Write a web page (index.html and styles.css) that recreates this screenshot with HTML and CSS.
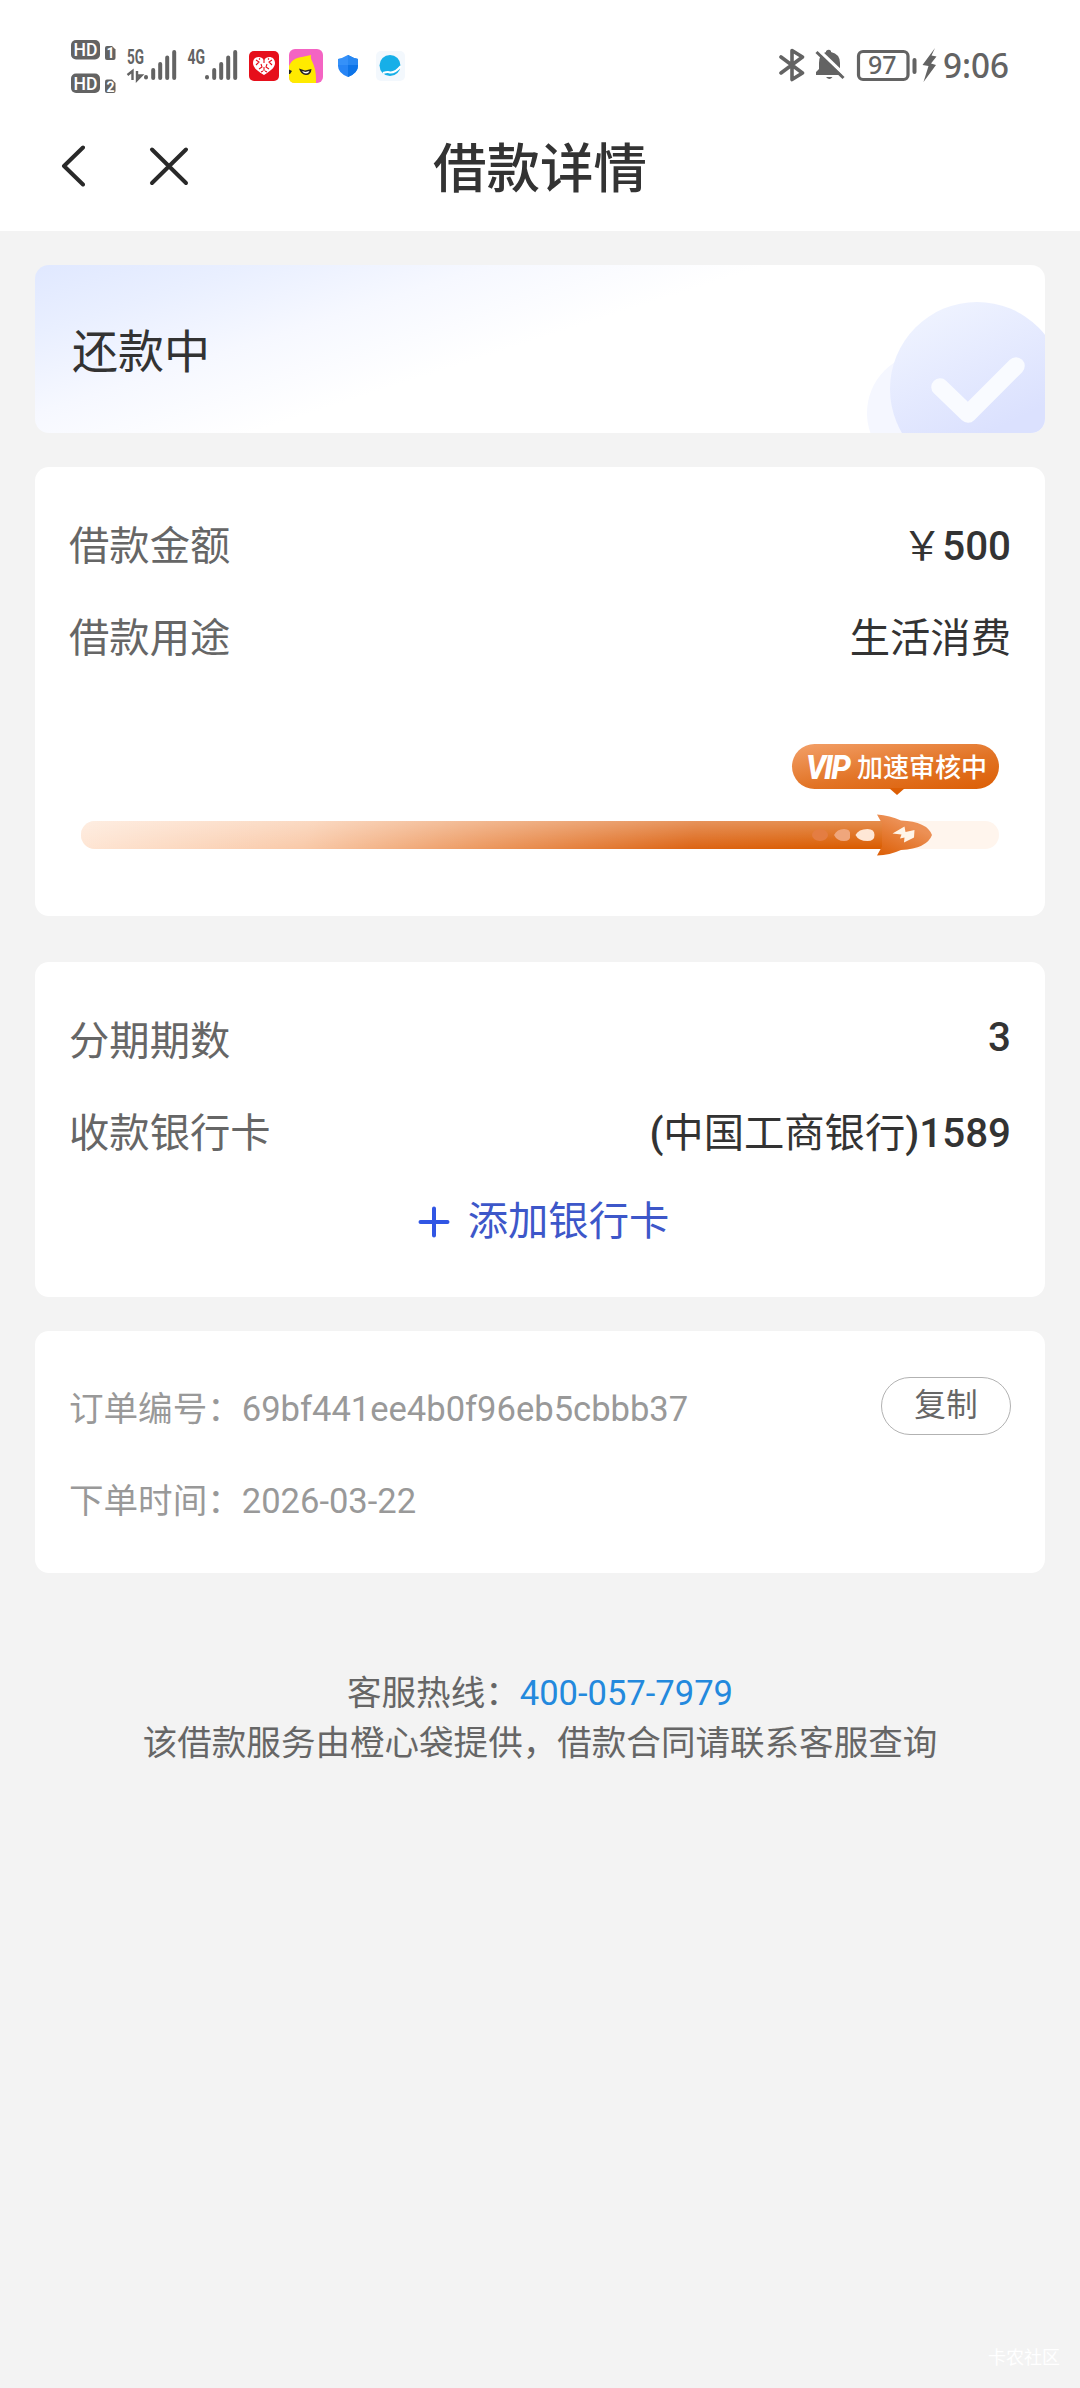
FILE: index.html
```html
<!DOCTYPE html>
<html lang="zh-CN">
<head>
<meta charset="utf-8">
<title>借款详情</title>
<link rel="stylesheet" href="styles.css">
</head>
<body>
<div class="page">
  <div class="top">
    <div class="status">
      <svg class="status-left" viewBox="71 36 335 60" width="335" height="60">
        <g fill="#636363">
          <rect x="71" y="40" width="29" height="19.500" rx="5"/>
          <rect x="71" y="73.500" width="29" height="19.500" rx="5"/>
          <path d="M105 48q0-2 2-2h5l3.500 3.500V58q0 2-2 2H107q-2 0-2-2z"/>
          <path d="M105 81.500q0-2 2-2h5l3.500 3.500v8q0 2-2 2H107q-2 0-2-2z"/>
        </g>
        <g class="hd">
          <text x="73.500" y="56" textLength="24" lengthAdjust="spacingAndGlyphs">HD</text>
          <text x="73.500" y="89.500" textLength="24" lengthAdjust="spacingAndGlyphs">HD</text>
          <text class="sim" x="106.500" y="58">1</text>
          <text class="sim" x="106.500" y="91.500">2</text>
        </g>
        <g class="net">
          <text x="127" y="63.500" textLength="17" lengthAdjust="spacingAndGlyphs">5G</text>
          <text x="187.500" y="63.500" textLength="17.500" lengthAdjust="spacingAndGlyphs">4G</text>
        </g>
        <g stroke="#636363" stroke-width="4" stroke-linecap="round">
          <path d="M146 77v.5M153.200 70v8M160.200 64v14M167.200 57.500V78M174.200 52v26"/>
          <path d="M207 77v.5M214.200 70v8M221.200 64v14M228.200 57.500V78M235.200 52v26"/>
        </g>
        <path d="M127.500 75l5-4v9M137 71v9l4.500-4.500H137" fill="none" stroke="#636363" stroke-width="2.400"/>
        <rect x="249" y="51" width="30" height="30" rx="5" fill="#e60f1b"/>
        <path d="M264 75c-8-5-11-8-11-12 0-7 8-8 11-3 3-5 11-4 11 3 0 4-3 7-11 12z" fill="#fff"/>
        <path d="M256 60l3 2-3 3M272 60l-3 2 3 3M264 59v4M259 69l3-2-1-3M269 69l-3-2 1-3M264 67v4M261 72l2-1M267 72l-2-1M259 58.500l1 1M269 58.500l-1 1" stroke="#e60f1b" stroke-width="1.100" fill="none"/>
        <rect x="289" y="49" width="34" height="34" rx="6" fill="#f464c3"/>
        <path d="M289 66c4-8 8-8 13-9l9-2c-1 4 2 7 3 11 2 5 2 11 2 17h-21q-6 0-6-6z" fill="#ffea00"/>
        <path d="M289 69.500l3 1.500-2 3h-1zM299 68.500l6 2 6.500-1.500q-.5 6-5.500 6-5 0-7-6.500z" fill="#222"/>
        <path d="M302 71l3.500 1 4-1q-1 2.500-3.500 2.500t-4-2.500z" fill="#fff"/>
        <path d="M348 55q5 3 10 4v7q0 7-10 11-10-4-10-11v-7q5-1 10-4z" fill="#2785f5"/>
        <path d="M348 55q5 3 10 4v7q0 7-10 11z" fill="#0d74e8"/>
        <path d="M348 55q5 3 10 4v6h-20v-6q5-1 10-4z" fill="#48a0ff" fill-opacity=".45"/>
        <rect x="376" y="51" width="29" height="30" rx="5" fill="#f3f8fd"/>
        <circle cx="390" cy="65.500" r="10.500" fill="#16afe8"/>
        <path d="M383 73q5-1.500 7-.5 5 .5 11-6.500" stroke="#fff" stroke-width="2" fill="none"/>
      </svg>
      <svg class="status-right" viewBox="779 36 231 60" width="231" height="60">
        <path d="M781 57l21.500 16-10.500 6.500v-29l10.500 6.500-21.500 16" fill="none" stroke="#636363" stroke-width="3.600" stroke-linejoin="round" stroke-linecap="round"/>
        <path d="M816 75v-3l3-3v-6q0-9 7-11v-1q3-2.500 5 0v1q9 2 9 11v6l3 3v3zM826 77h6.500q-3 4-6.500 0z" fill="#636363"/>
        <path d="M817 48.500l28 27" stroke="#fff" stroke-width="3.500"/>
        <path d="M816.500 52l27 26" stroke="#636363" stroke-width="3"/>
        <rect x="858.500" y="51.500" width="49.500" height="28" rx="4.500" fill="none" stroke="#636363" stroke-width="3.200"/>
        <path d="M914.500 60v12" stroke="#636363" stroke-width="4" stroke-linecap="round"/>
        <path d="M935 48l-12.500 17 6 1-5 16 12.500-17-5-1.500 5.500-7-5-1z" fill="#636363"/>
        <text class="battery" x="868" y="74" textLength="28.500" lengthAdjust="spacingAndGlyphs">97</text>
        <text class="clock" x="943" y="78" textLength="66" lengthAdjust="spacingAndGlyphs">9:06</text>
      </svg>
    </div>
    <header class="nav">
      <div class="nav-side">
        <svg width="24" height="44" viewBox="61 144 24 44"><path d="M83 147.500L64 166l19 18.500" class="nav-line"/></svg>
        <svg width="40" height="44" viewBox="149 144 40 44"><path d="M152 149.500l34 33.500M186 149.500L152 183" class="nav-line"/></svg>
      </div>
      <h1>借款详情</h1>
      <div class="nav-side"></div>
    </header>
  </div>

  <main>
    <section class="card state">
      <span>还款中</span>
      <svg class="state-mark" viewBox="860 265 185 168" width="185" height="168">
        <defs>
          <linearGradient id="disc" x1="0.200" y1="0" x2="0.700" y2="1">
            <stop offset="0" stop-color="#f0f4ff"/><stop offset=".75" stop-color="#dbe1fe"/><stop offset="1" stop-color="#dbe1fe"/>
          </linearGradient>
        </defs>
        <circle cx="927" cy="413" r="60" fill="#f5f7ff"/>
        <circle cx="977" cy="389" r="87" fill="url(#disc)"/>
        <path d="M940 387l28 27 48-48" fill="none" stroke="#f9fbff" stroke-width="17.500" stroke-linecap="round" stroke-linejoin="round"/>
      </svg>
    </section>

    <section class="card amount">
      <div class="row"><span class="label">借款金额</span><span class="value">￥<b>500</b></span></div>
      <div class="row"><span class="label">借款用途</span><span class="value">生活消费</span></div>
      <div class="progress">
        <div class="bubble"><i>VIP</i><span>加速审核中</span></div>
        <div class="track">
          <div class="fill"></div>
          <svg class="rocket" viewBox="808 812 126 46" width="126" height="46">
            <defs>
              <linearGradient id="hull" x1="0" y1="1" x2=".6" y2="0">
                <stop offset="0" stop-color="#dc5e05"/><stop offset=".8" stop-color="#ec9055"/>
              </linearGradient>
            </defs>
            <ellipse cx="820" cy="835" rx="8" ry="6" fill="#e47d42"/>
            <path d="M834 835q3-6 10-6t6 6q1 6-6 6t-10-6z" fill="#efa67c"/>
            <path d="M855.500 835q3-6 12-6 7 0 7 6t-7 6q-9 0-12-6z" fill="#fee7d6"/>
            <path d="M877 814.500q13 1 24 6 26 1 31 14.500-5 13.500-31 15-11 5-24 5.500l5-9v-23z" fill="url(#hull)"/>
            <path d="M892.500 833.500l12-7 1 5.500 9-2-.5 7.500-10 5 .5-5-4.500 1 1.500-4z" fill="#fff5e9"/>
          </svg>
        </div>
      </div>
    </section>

    <section class="card bank">
      <div class="row"><span class="label">分期期数</span><span class="value term"><b>3</b></span></div>
      <div class="row"><span class="label">收款银行卡</span><span class="value"><b>(</b>中国工商银行<b>)1589</b></span></div>
      <a class="add">
        <svg width="32" height="32" viewBox="0 0 32 32"><path d="M2.500 16h27M16 2.500v27"/></svg>
        <span>添加银行卡</span>
      </a>
    </section>

    <section class="card order">
      <div class="row"><span>订单编号：69bf441ee4b0f96eb5cbbb37</span><button class="copy">复制</button></div>
      <div class="row"><span>下单时间：2026-03-22</span></div>
    </section>

    <footer>
      <p>客服热线：<a>400-057-7979</a></p>
      <p>该借款服务由橙心袋提供，借款合同请联系客服查询</p>
    </footer>
  </main>
  <div class="watermark">卡农社区</div>
</div>
</body>
</html>
```
FILE: styles.css
```css
* { box-sizing: border-box; }

body {
  margin: 0;
  background: #f3f3f3;
  color: #333;
  font-family: Roboto, "Noto Sans CJK SC", sans-serif;
}

.page {
  width: 1080px;
  height: 2388px;
  display: flex;
  flex-direction: column;
  overflow: hidden;
}

svg { display: block; }

/* status bar and navigation */
.top { height: 231px; background: #fff; }

.status {
  display: flex;
  justify-content: space-between;
  height: 96px;
  padding: 36px 70px 0 71px;
}

.hd { fill: #fff; font: 500 18px Roboto, sans-serif; }
.sim { font-weight: 700; font-size: 14px; }
.net { fill: #636363; font: 700 20px Roboto, sans-serif; }
.battery { fill: #636363; font: 500 25px "Noto Sans", sans-serif; }
.clock { fill: #636363; font: 500 34px "Noto Sans", sans-serif; }

.nav {
  display: flex;
  align-items: center;
  height: 140px;
  padding: 0 61px;
}

.nav-side { display: flex; flex: 1; gap: 64px; }
.nav-line { fill: none; stroke: #292929; stroke-width: 4; stroke-linecap: round; stroke-linejoin: round; }

h1 { margin: 0; padding-top: 7px; font-size: 53.500px; font-weight: 500; line-height: 72px; }

/* cards */
main { flex: 1; padding: 34px 35px 0; }

.card { background: #fff; border-radius: 14px; }

.row {
  display: flex;
  justify-content: space-between;
  height: 92px;
  line-height: 92px;
}

.label { color: #666; }
.value b { font-weight: 500; }

.state {
  display: flex;
  justify-content: space-between;
  height: 168px;
  padding-left: 37px;
  overflow: hidden;
  background: linear-gradient(162deg, #e0e8ff 0%, #e9efff 14%, #f6f8ff 30%, #fff 48%);
  font-size: 46px;
  line-height: 174px;
}

.amount {
  height: 449px;
  margin-top: 34px;
  padding: 34px 34px 0;
  font-size: 40.320px;
}

.progress {
  display: flex;
  flex-direction: column;
  align-items: flex-end;
  gap: 32px;
  padding: 59px 12px 0;
}

.bubble {
  position: relative;
  display: flex;
  width: 207px;
  height: 45px;
  padding-left: 14px;
  border-radius: 23px;
  background: linear-gradient(170deg, #f3a069, #e27426 55%, #dc5e05);
  color: #fff;
  font-size: 26px;
  font-weight: 500;
  line-height: 48px;
  white-space: nowrap;
}

.bubble i {
  width: 51px;
  font-weight: 800;
  font-size: 34px;
  letter-spacing: -2px;
  line-height: 46px;
  transform: scaleX(.92);
  transform-origin: left;
}

.bubble::after {
  content: "";
  position: absolute;
  left: 97px;
  top: 44px;
  border: 8px solid transparent;
  border-top: 7px solid #dc5e05;
  border-bottom: 0;
}

.track {
  position: relative;
  width: 918px;
  height: 28px;
  border-radius: 14px;
  background: #fff5ed;
}

.fill {
  width: 806px;
  height: 28px;
  border-radius: 14px 0 0 14px;
  background:
    linear-gradient(rgba(255, 255, 255, .3), rgba(255, 255, 255, 0)),
    linear-gradient(100deg, #fee6d5 0%, #f9c9a8 28%, #ec985f 50%, #dc6414 76%, #da5c00 95%);
}

.rocket { position: absolute; left: 727px; top: -9px; }

.bank {
  height: 335px;
  margin-top: 46px;
  padding: 34px 34px 0;
  font-size: 40.320px;
}

.term { line-height: 84px; }

.add {
  display: flex;
  align-items: center;
  justify-content: center;
  gap: 18px;
  height: 83px;
  padding-left: 7px;
  color: #3d57c9;
  line-height: 83px;
}

.add svg { fill: none; stroke: #3156e4; stroke-width: 4; stroke-linecap: round; }

.order {
  height: 242px;
  margin-top: 34px;
  padding: 32px 34px 0;
  color: #999;
  font-size: 34.560px;
}

.copy {
  width: 130px;
  height: 58px;
  margin-top: 14px;
  padding: 0;
  border: 1px solid #b2b2b2;
  border-radius: 29px;
  background: #fff;
  color: #666;
  font: 31.700px/54px Roboto, "Noto Sans CJK SC", sans-serif;
}

footer {
  padding-top: 95px;
  color: #666;
  font-size: 34.560px;
  line-height: 50px;
  text-align: center;
}

footer p { margin: 0; }
footer a { color: #2389dd; }

.watermark {
  padding: 0 20px 14px 0;
  color: #fff;
  font-size: 18px;
  line-height: 32px;
  text-align: right;
}
```
